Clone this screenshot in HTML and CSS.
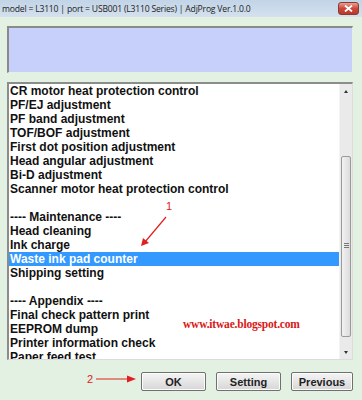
FILE: index.html
```html
<!DOCTYPE html>
<html lang="en">
<head>
  <meta charset="UTF-8">
  <title>AdjProg</title>
  <link rel="stylesheet" href="styles.css">
</head>
<body>
  <div class="window">
    <header class="titlebar">
      <span class="title">model = L3110 | port = USB001 (L3110 Series) | AdjProg Ver.1.0.0</span>
      <button class="close" aria-label="Close">
        <svg width="9" height="7" viewBox="0 0 9 7"><path d="M1 0.5 L8 6.5 M8 0.5 L1 6.5" stroke="#fff" stroke-width="1.8"/></svg>
      </button>
    </header>

    <main class="content">
      <div class="info-box"></div>

      <div class="listbox">
        <ul class="items">
          <li>CR motor heat protection control</li>
          <li>PF/EJ adjustment</li>
          <li>PF band adjustment</li>
          <li>TOF/BOF adjustment</li>
          <li>First dot position adjustment</li>
          <li>Head angular adjustment</li>
          <li>Bi-D adjustment</li>
          <li>Scanner motor heat protection control</li>
          <li class="blank"></li>
          <li>---- Maintenance ----</li>
          <li>Head cleaning</li>
          <li>Ink charge</li>
          <li class="selected">Waste ink pad counter</li>
          <li>Shipping setting</li>
          <li class="blank"></li>
          <li>---- Appendix ----</li>
          <li>Final check pattern print</li>
          <li>EEPROM dump</li>
          <li>Printer information check</li>
          <li>Paper feed test</li>
        </ul>
        <div class="scrollbar">
          <div class="arrow up"></div>
          <div class="track">
            <div class="thumb"><span class="grip"></span></div>
          </div>
          <div class="arrow down"></div>
        </div>
        <span class="watermark">www.itwae.blogspot.com</span>
      </div>

      <div class="actions">
        <button class="btn">OK</button>
        <button class="btn">Setting</button>
        <button class="btn">Previous</button>
      </div>
    </main>

    <!-- tutorial annotations -->
    <div class="note note-1">
      <span class="num">1</span>
      <svg width="30" height="32" viewBox="0 0 30 32"><path d="M26 1 L5 26" stroke="#e02020" stroke-width="1.2"/><path d="M1 30 L3 22 L9 27 Z" fill="#e02020"/></svg>
    </div>
    <div class="note note-2">
      <span class="num">2</span>
      <svg width="40" height="8" viewBox="0 0 40 8"><path d="M0 4 L33 4" stroke="#e02020" stroke-width="1.2"/><path d="M40 4 L31 0.5 L31 7.5 Z" fill="#e02020"/></svg>
    </div>
  </div>
</body>
</html>
```

FILE: styles.css
```css
* {
  margin: 0;
  padding: 0;
  box-sizing: border-box;
}

body {
  width: 362px;
  height: 400px;
  overflow: hidden;
  background: #e2f1e2;
  font-family: "Liberation Sans", Arial, sans-serif;
}

.window {
  position: relative;
  height: 400px;
}

.titlebar {
  height: 17px;
  display: flex;
  align-items: center;
  justify-content: space-between;
  padding: 0 3px 0 2px;
  background: linear-gradient(to bottom, #c2d4e7, #d4e1ee);
}

.title {
  font-family: "Open Sans", sans-serif;
  font-size: 8.6px;
  color: #222;
  letter-spacing: -0.2px;
}

.close {
  width: 21px;
  height: 13px;
  border: 1px solid #8a3a30;
  border-radius: 3px;
  background: linear-gradient(to bottom, #e8a090, #c9483a 50%, #b93a2c);
  display: flex;
  align-items: center;
  justify-content: center;
}

.content {
  padding: 9px 9px 0 7px;
}

.info-box {
  height: 47px;
  background: #c7cffb;
  border-top: 2px solid #8a8a8a;
  border-left: 2px solid #8a8a8a;
  border-right: 1px solid #e6eee6;
  border-bottom: 1px solid #e6eee6;
}

.listbox {
  position: relative;
  margin-top: 9px;
  height: 278px;
  display: flex;
  overflow: hidden;
  background: #fff;
  border-top: 2px solid #8c8c8c;
  border-left: 2px solid #8c8c8c;
  border-right: 1px solid #dcdcdc;
  border-bottom: 1px solid #dcdcdc;
}

.items {
  flex: 1;
  list-style: none;
}

.items li {
  height: 14px;
  line-height: 14px;
  padding-left: 1px;
  font-size: 12px;
  font-weight: bold;
  color: #111;
  white-space: nowrap;
}

.items li.selected {
  background: #3399ff;
  color: #fff;
}

.scrollbar {
  width: 13px;
  display: flex;
  flex-direction: column;
  background: #eaeaea;
  border-left: 1px solid #f4f4f4;
}

.arrow {
  height: 16px;
  position: relative;
}

.arrow::after {
  content: "";
  position: absolute;
  left: 4px;
  border-left: 2.5px solid transparent;
  border-right: 2.5px solid transparent;
}

.arrow.up::after {
  top: 6px;
  border-bottom: 3px solid #333;
}

.arrow.down::after {
  top: 7px;
  border-top: 3px solid #333;
}

.track {
  flex: 1;
  padding-top: 56px;
  padding-bottom: 7px;
}

.thumb {
  height: 181px;
  margin: 0 1px;
  border: 1px solid #9a9a9a;
  border-radius: 2px;
  background: linear-gradient(to right, #f2f2f2, #dcdcdc);
  display: flex;
  align-items: center;
  justify-content: center;
}

.grip {
  width: 5px;
  height: 6px;
  background: repeating-linear-gradient(to bottom, #777 0 1px, transparent 1px 2px);
}

.watermark {
  position: absolute;
  left: 174px;
  top: 234px;
  font-family: "Liberation Serif", serif;
  font-weight: bold;
  font-size: 11.5px;
  color: #d81818;
  letter-spacing: -0.2px;
}

.actions {
  display: flex;
  justify-content: flex-end;
  gap: 10px;
  margin-top: 12px;
}

.btn {
  width: 65px;
  height: 19px;
  font-family: "Liberation Sans", Arial, sans-serif;
  font-size: 11px;
  font-weight: bold;
  color: #222;
  border: 1px solid #707070;
  border-radius: 2px;
  background: linear-gradient(to bottom, #f4f4f4, #e6e6e6 50%, #d6d6d6);
  box-shadow: inset 0 0 0 1px #fbfbfb;
}

.btn:last-child {
  width: 62px;
}

.note {
  position: absolute;
  color: #e02020;
}

.note .num {
  font-family: "Liberation Sans", Arial, sans-serif;
  font-size: 11px;
}

.note-1 {
  left: 140px;
  top: 200px;
}

.note-1 .num {
  position: absolute;
  left: 26px;
  top: 0;
}

.note-1 svg {
  position: absolute;
  left: 0;
  top: 16px;
}

.note-2 {
  left: 87px;
  top: 373px;
  display: flex;
  align-items: center;
  gap: 3px;
}
```
